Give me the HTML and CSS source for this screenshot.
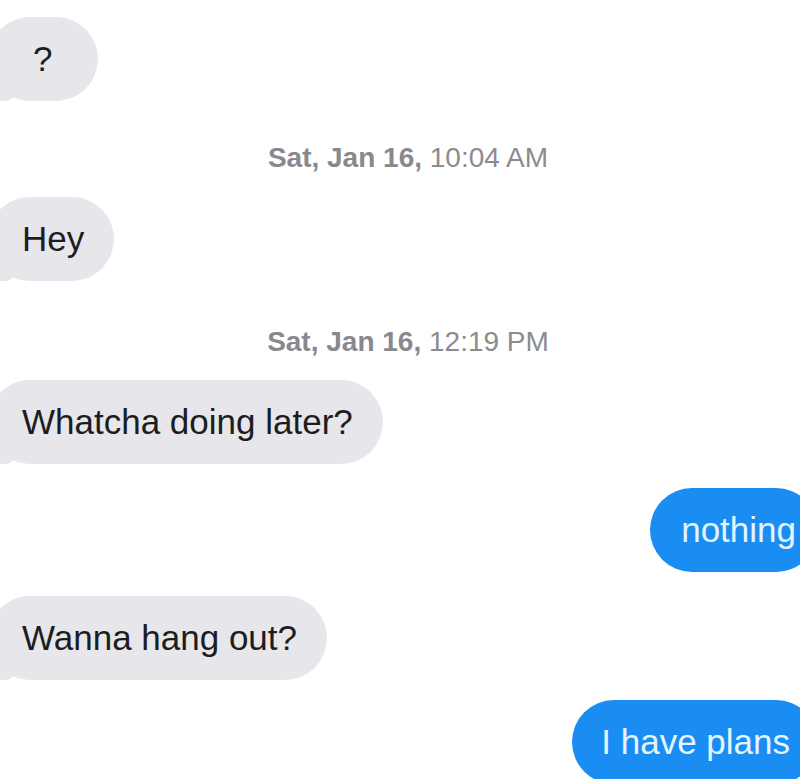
FILE: index.html
```html
<!DOCTYPE html>
<html lang="en">
<head>
  <meta charset="UTF-8">
  <title>Messages</title>
  <meta name="viewport" content="width=device-width, initial-scale=1.0">
  <link rel="stylesheet" href="styles.css">
</head>
<body>
  <div class="thread">
    <div class="row in first">
      <div class="bubble grey single">?</div>
    </div>

    <div class="stamp stamp-1"><b>Sat, Jan 16,</b> 10:04 AM</div>

    <div class="row in after-stamp-1">
      <div class="bubble grey">Hey</div>
    </div>

    <div class="stamp stamp-2"><b>Sat, Jan 16,</b> 12:19 PM</div>

    <div class="row in after-stamp-2">
      <div class="bubble grey">Whatcha doing later?</div>
    </div>

    <div class="row out gap-24">
      <div class="bubble blue">nothing</div>
    </div>

    <div class="row in gap-24">
      <div class="bubble grey">Wanna hang out?</div>
    </div>

    <div class="row out gap-20">
      <div class="bubble blue plans">I have plans</div>
    </div>
  </div>
</body>
</html>
```

FILE: styles.css
```css
html, body {
  margin: 0;
  padding: 0;
  background: #fff;
  overflow: hidden;
}
body {
  width: 800px;
  height: 779px;
  font-family: 'Liberation Sans', Arial, sans-serif;
}
.thread {
  display: flex;
  flex-direction: column;
  padding-top: 17px;
}
.row {
  display: flex;
}
.row.in {
  justify-content: flex-start;
  margin-left: -12px;
}
.row.out {
  justify-content: flex-end;
  margin-right: -18px;
}
.bubble {
  position: relative;
  font-size: 35px;
  line-height: 40px;
  padding: 22px 30px 22px 34px;
  border-radius: 42px;
  white-space: nowrap;
}
.bubble.grey {
  background: #e6e6eb;
  color: #1d1d1f;
}
.bubble.single {
  padding-left: 45px;
  padding-right: 46px;
}
.bubble.grey::before {
  content: "";
  position: absolute;
  left: 0;
  bottom: 0;
  width: 26px;
  height: 26px;
  background: #e6e6eb;
  border-radius: 0 0 8px 14px;
}
.bubble.blue {
  background: #1a8df2;
  color: #e4f4ff;
  padding: 22px 22px 22px 31px;
}
.bubble.plans {
  padding-left: 29px;
  padding-right: 28px;
}
.stamp {
  text-align: center;
  font-size: 28px;
  line-height: 34px;
  color: #8b8b90;
  padding-left: 16px;
}
.stamp b {
  font-weight: 600;
  color: #88888d;
}
.stamp-1 {
  margin-top: 40px;
}
.after-stamp-1 {
  margin-top: 22px;
}
.stamp-2 {
  margin-top: 44px;
}
.after-stamp-2 {
  margin-top: 21px;
}
.gap-24 {
  margin-top: 24px;
}
.gap-20 {
  margin-top: 20px;
}
```
